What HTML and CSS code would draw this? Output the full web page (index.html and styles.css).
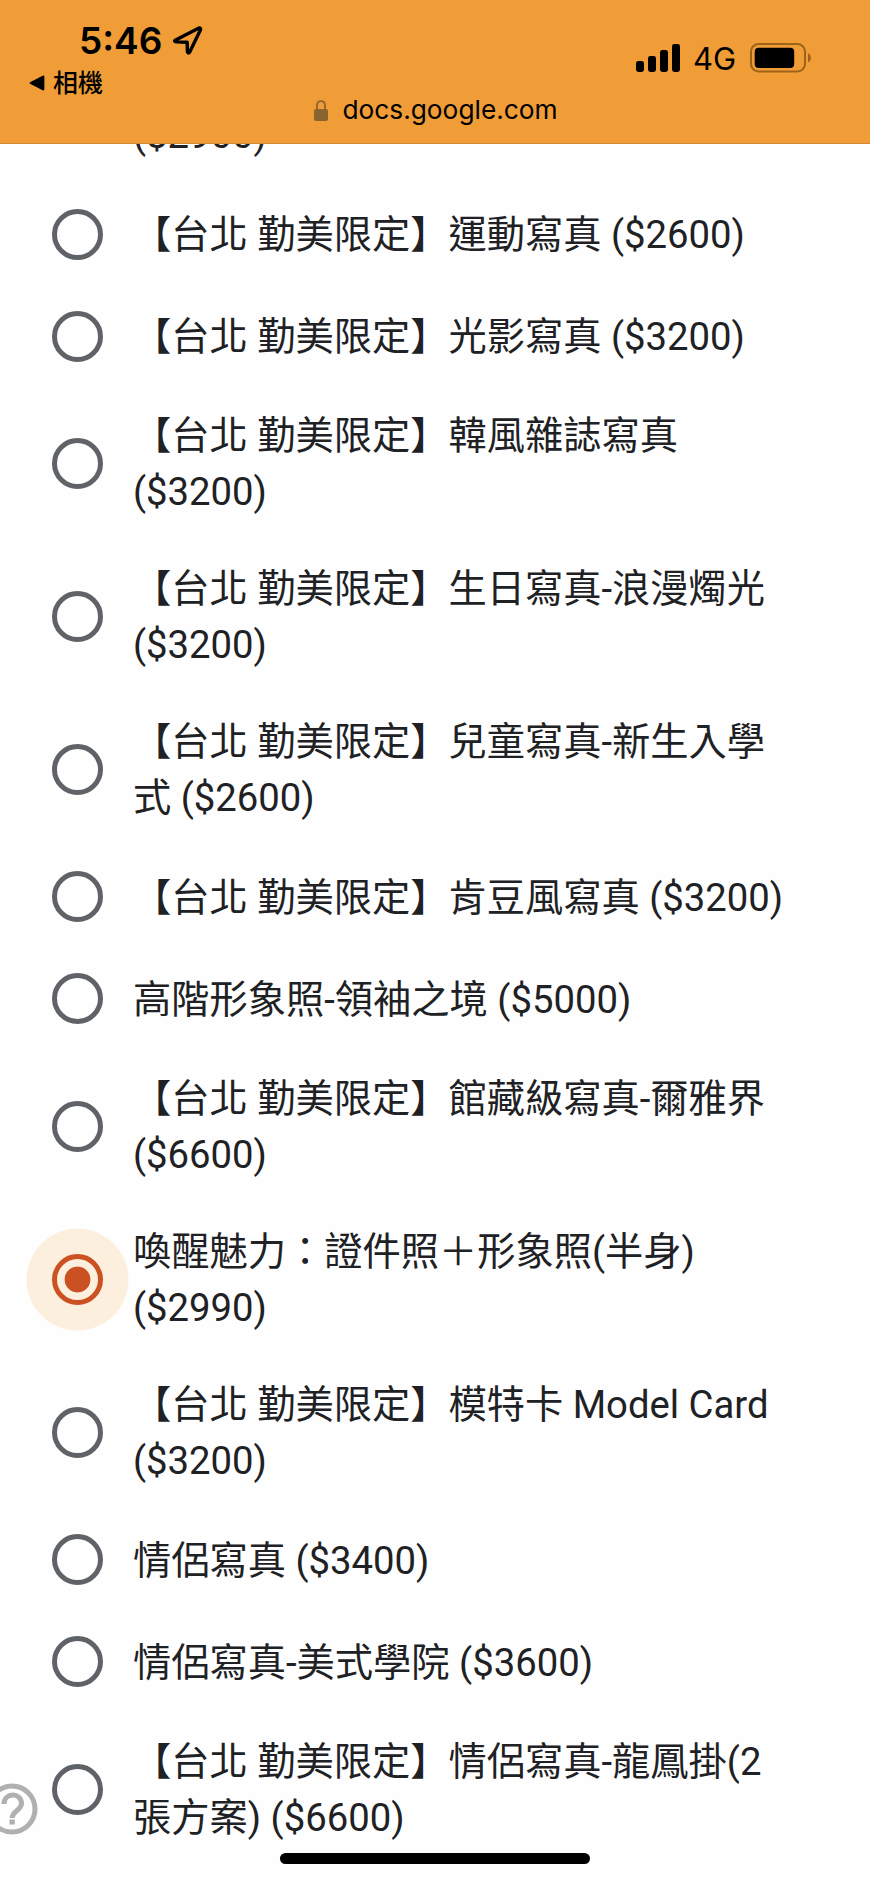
FILE: index.html
```html
<!DOCTYPE html>
<html lang="zh-Hant">
<head>
  <meta charset="UTF-8">
  <meta name="viewport" content="width=device-width, initial-scale=1.0">
  <title>docs.google.com</title>
  <link rel="stylesheet" href="styles.css">
</head>
<body>
  <header class="browser-bar">
    <div class="status-bar">
      <div class="status-left">
        <div class="clock">
          <span class="time">5:46</span>
          <svg class="location" width="30" height="30" viewBox="0 0 30 30">
            <path d="M2.2 14.2 L25.5 2.2 Q28.2 1.4 27.3 4.2 L16.6 26.2 Q15.1 28 14.4 25.5 L14.2 16.2 L3.2 15.9 Q0.8 15.4 2.2 14.2 Z" fill="none" stroke="#000" stroke-width="3.4" stroke-linejoin="round"/>
          </svg>
        </div>
        <div class="back-link">
          <svg width="16" height="16" viewBox="0 0 16 16">
            <path d="M1 7.2 L13.6 0.7 Q15.4 0.2 15.4 2 L15.4 14 Q15.4 15.8 13.6 15.3 L1 8.8 Q0 8 1 7.2 Z"/>
          </svg>
          <span class="back-text">相機</span>
        </div>
      </div>
      <div class="status-right">
        <svg class="signal" width="44" height="28" viewBox="0 0 44 28">
          <rect x="0" y="17" width="8" height="11" rx="2.4"/>
          <rect x="12" y="12" width="8" height="16" rx="2.4"/>
          <rect x="24" y="6" width="8" height="22" rx="2.4"/>
          <rect x="36" y="0" width="8" height="28" rx="2.4"/>
        </svg>
        <span class="network">4G</span>
        <svg class="battery" width="62" height="30" viewBox="0 0 62 30">
          <rect x="1" y="1" width="54" height="27.5" rx="7.5" fill="none" stroke="#9d6318" stroke-width="2"/>
          <rect x="4.7" y="4.7" width="39.5" height="20.3" rx="4"/>
          <path d="M58 10.3 Q61 11.8 61 14.7 Q61 17.8 58 19.2 Z" fill="#9d6318"/>
        </svg>
      </div>
    </div>
    <div class="address">
      <svg width="14" height="21" viewBox="0 0 14 21">
        <path d="M3 10 V5.6 C3 -0.5 11 -0.5 11 5.6 V10" fill="none" stroke="#8a642f" stroke-width="1.8"/>
        <rect x="0" y="9" width="14" height="12" rx="2" fill="#8a642f"/>
      </svg>
      <span class="domain">docs.google.com</span>
    </div>
  </header>

  <main class="options">
    <div class="option clipped"><div class="label">($2900)</div></div>
    <div class="option"><span class="radio"></span><div class="label">【台北 勤美限定】運動寫真 ($2600)</div></div>
    <div class="option"><span class="radio"></span><div class="label">【台北 勤美限定】光影寫真 ($3200)</div></div>
    <div class="option"><span class="radio"></span><div class="label">【台北 勤美限定】韓風雜誌寫真<br>($3200)</div></div>
    <div class="option"><span class="radio"></span><div class="label">【台北 勤美限定】生日寫真-浪漫燭光<br>($3200)</div></div>
    <div class="option"><span class="radio"></span><div class="label">【台北 勤美限定】兒童寫真-新生入學<br>式 ($2600)</div></div>
    <div class="option"><span class="radio"></span><div class="label">【台北 勤美限定】肯豆風寫真 ($3200)</div></div>
    <div class="option"><span class="radio"></span><div class="label">高階形象照-領袖之境 ($5000)</div></div>
    <div class="option"><span class="radio"></span><div class="label">【台北 勤美限定】館藏級寫真-爾雅界<br>($6600)</div></div>
    <div class="option"><span class="radio selected"></span><div class="label">喚醒魅力：證件照＋形象照(半身)<br>($2990)</div></div>
    <div class="option"><span class="radio"></span><div class="label">【台北 勤美限定】模特卡 Model Card<br>($3200)</div></div>
    <div class="option"><span class="radio"></span><div class="label">情侶寫真 ($3400)</div></div>
    <div class="option"><span class="radio"></span><div class="label">情侶寫真-美式學院 ($3600)</div></div>
    <div class="option"><span class="radio"></span><div class="label">【台北 勤美限定】情侶寫真-龍鳳掛(2<br>張方案) ($6600)</div></div>
  </main>

  <svg class="help" width="52" height="52" viewBox="0 0 52 52">
    <circle cx="26" cy="26" r="23" fill="none" stroke="#b0b0b0" stroke-width="5"/>
    <path d="M18 21 C18 9 35.5 9 35.5 20.5 C35.5 27 26.2 28 26.2 35" fill="none" stroke="#b0b0b0" stroke-width="5"/>
    <rect x="23.5" y="36.5" width="5.3" height="5" fill="#b0b0b0"/>
  </svg>
  <div class="home-indicator"></div>
</body>
</html>
```
FILE: styles.css
```css
* {
  box-sizing: border-box;
}

body {
  margin: 0;
  height: 1882px;
  background-color: #fefefe;
  color: #202124;
  font-family: Roboto, "Noto Sans CJK TC", sans-serif;
  overflow: hidden;
}

svg {
  display: block;
  flex-shrink: 0;
}

.browser-bar {
  height: 144px;
  background-color: #f09d38;
  border-bottom: 1px solid #cf8a38;
  color: #000;
  font-family: Inter, "Noto Sans CJK TC", sans-serif;
}

.status-bar {
  display: flex;
  justify-content: space-between;
  height: 96px;
  padding: 20px 58px 0 29px;
}

.clock {
  display: flex;
  align-items: center;
  gap: 11px;
  height: 42px;
  padding-left: 50px;
}

.time {
  font-size: 37px;
  font-weight: 600;
  line-height: 42px;
}

.back-link {
  display: flex;
  align-items: center;
  gap: 8px;
  height: 42px;
}

.back-text {
  font-size: 25px;
  font-weight: 500;
  line-height: 42px;
}

.status-right {
  display: flex;
  align-items: center;
  height: 76px;
}

.network {
  margin-left: 13px;
  width: 57px;
  padding-top: 2px;
  font-size: 31px;
  line-height: 40px;
}

.address {
  display: flex;
  justify-content: center;
  align-items: center;
  gap: 14px;
  height: 28px;
  padding-left: 2px;
}

.domain {
  font-size: 26.3px;
  line-height: 28px;
}

.option {
  display: flex;
  align-items: center;
  min-height: 102px;
  padding: 20.4px 0 20.4px 52px;
}

.option.clipped {
  align-items: flex-end;
  height: 39px;
  min-height: 0;
  padding: 0 0 20.4px 133px;
  overflow: hidden;
}

.label {
  margin: 1px 0 -1px;
  font-size: 38.25px;
  line-height: 56.1px;
  white-space: nowrap;
}

.option.clipped .label {
  margin: 0;
}

.radio {
  flex-shrink: 0;
  width: 51px;
  height: 51px;
  margin-right: 30px;
  border: 5px solid #5f6368;
  border-radius: 50%;
}

.radio.selected {
  border-color: #cb5123;
  background: radial-gradient(circle, #cb5123 12.5px, #fcefdd 13.3px);
  box-shadow: 0 0 0 25.5px #fcefdd;
}

.help {
  position: absolute;
  left: -14px;
  top: 1783px;
}

.home-indicator {
  position: absolute;
  left: 280px;
  top: 1853px;
  width: 310px;
  height: 11px;
  border-radius: 6px;
  background-color: #000;
}
```
